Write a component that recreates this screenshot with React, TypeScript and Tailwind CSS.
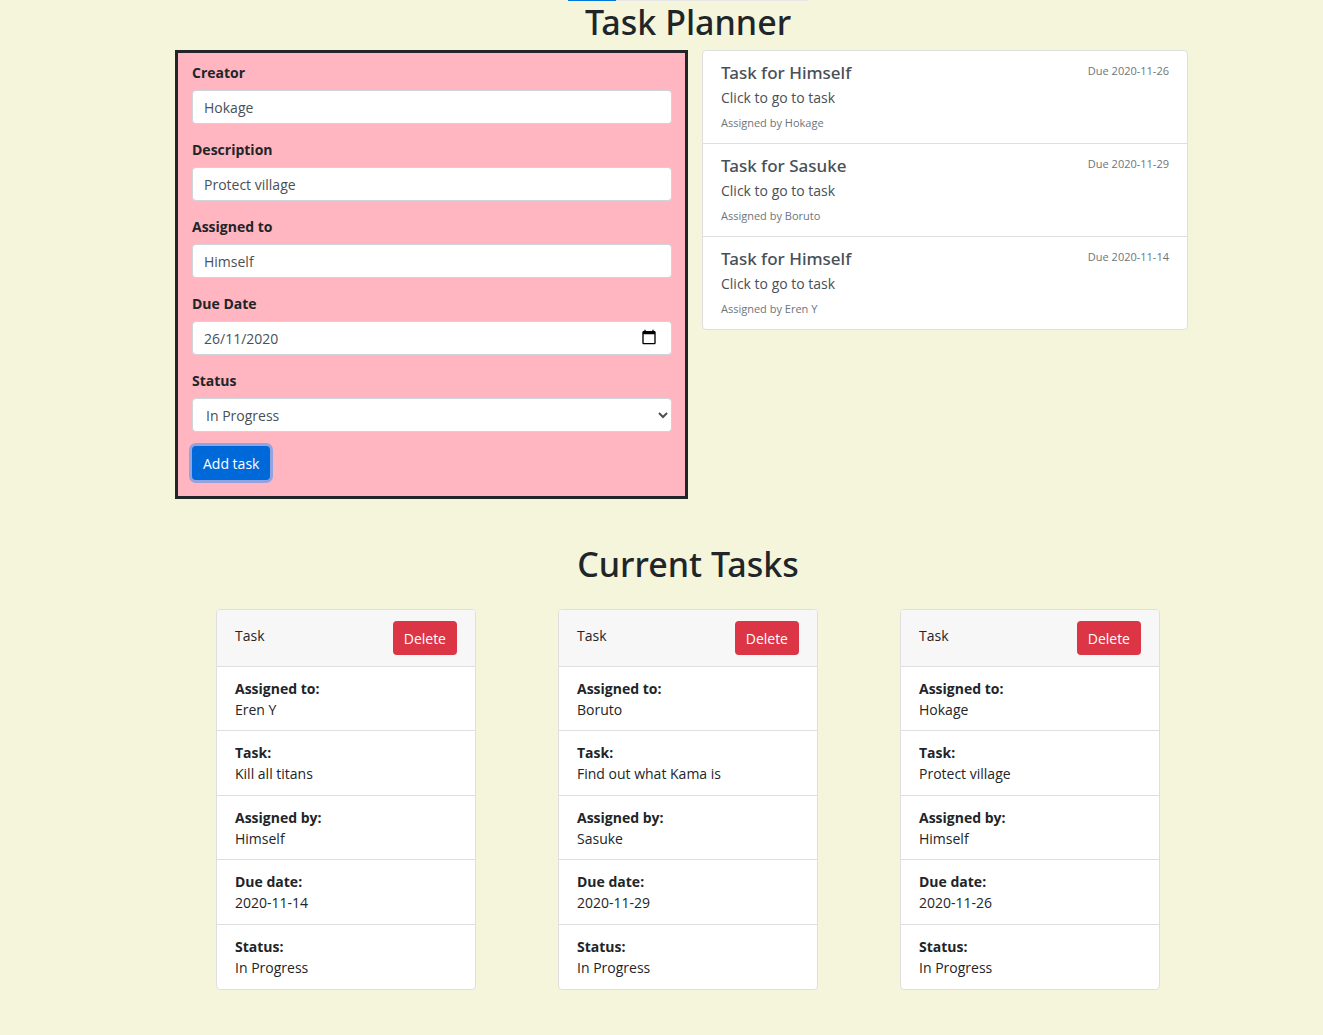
import React from "react";

type Task = {
  creator: string;
  description: string;
  assignee: string;
  due: string;
  status: string;
};

const tasks: Task[] = [
  { creator: "Eren Y", description: "Kill all titans", assignee: "Himself", due: "2020-11-14", status: "In Progress" },
  { creator: "Boruto", description: "Find out what Kama is", assignee: "Sasuke", due: "2020-11-29", status: "In Progress" },
  { creator: "Hokage", description: "Protect village", assignee: "Himself", due: "2020-11-26", status: "In Progress" },
];

const control =
  "block h-[34px] w-full rounded-[4px] border border-[#ced4da] bg-white px-[11px] text-[14px] text-[#495057]";

const heading = "text-center font-['Noto_Sans',sans-serif] text-[34px] leading-[43px] font-medium";

function Field({ id, label, children }: { id: string; label: string; children: React.ReactNode }) {
  return (
    <div>
      <label htmlFor={id} className="mb-[6px] block leading-[22px] font-bold">
        {label}
      </label>
      {children}
    </div>
  );
}

function TaskForm() {
  return (
    <form
      className="border-[3px] border-[#212529] bg-[#ffb6c1] pt-[9px] pr-[13px] pb-4 pl-[14px]"
      onSubmit={(e) => e.preventDefault()}
    >
      <div className="mb-[14px] flex flex-col gap-[15px]">
        <Field id="creator" label="Creator">
          <input id="creator" type="text" defaultValue="Hokage" className={control} />
        </Field>
        <Field id="description" label="Description">
          <input id="description" type="text" defaultValue="Protect village" className={control} />
        </Field>
        <Field id="assigned" label="Assigned to">
          <input id="assigned" type="text" defaultValue="Himself" className={control} />
        </Field>
        <Field id="due" label="Due Date">
          <div className="relative">
            <input id="due" type="text" inputMode="numeric" defaultValue="26/11/2020" className={control} />
            <button type="button" aria-label="Open calendar" className="absolute top-[8px] right-[15px]">
              <svg width="16" height="16" viewBox="0 0 24 24" fill="#000">
                <path d="M20 3h-1V1h-2v2H7V1H5v2H4c-1.1 0-2 .9-2 2v16c0 1.1.9 2 2 2h16c1.1 0 2-.9 2-2V5c0-1.1-.9-2-2-2zm0 18H4V8h16v13z" />
              </svg>
            </button>
          </div>
        </Field>
        <Field id="status" label="Status">
          <select
            id="status"
            defaultValue="In Progress"
            className="block h-[34px] w-full rounded-[4px] border border-[#ced4da] bg-white pl-[9px] text-[14px] text-[#495057]"
          >
            <option>To Do</option>
            <option>In Progress</option>
            <option>Review</option>
            <option>Done</option>
          </select>
        </Field>
      </div>
      <button
        type="submit"
        className="block h-[34px] rounded-[4px] bg-[#0069d9] px-[11px] text-white ring-[3px] ring-[#268fff]/50"
      >
        Add task
      </button>
    </form>
  );
}

function TaskList() {
  return (
    <div className="mr-[13px] ml-[14px] divide-y divide-[#dfdfdf] self-start rounded-[4px] border border-[#dfdfdf] bg-white">
      {[...tasks].reverse().map((t) => (
        <a key={t.creator} href="#tasks" className="block px-[18px] pt-[11px] pb-[10px] text-[#495057]">
          <div className="flex justify-between">
            <h5 className="mb-[3px] font-['Noto_Sans',sans-serif] text-[17px] leading-[22px] font-medium">
              Task for {t.assignee}
            </h5>
            <small className="text-[11px] leading-[18px] text-[#6c757d]">Due {t.due}</small>
          </div>
          <p className="mb-[3px] leading-[22px]">Click to go to task</p>
          <small className="block text-[11px] leading-[21px] text-[#6c757d]">Assigned by {t.creator}</small>
        </a>
      ))}
    </div>
  );
}

function TaskCard({ task }: { task: Task }) {
  const rows = [
    ["Assigned to:", task.creator],
    ["Task:", task.description],
    ["Assigned by:", task.assignee],
    ["Due date:", task.due],
    ["Status:", task.status],
  ];
  return (
    <article className="mx-[41px] overflow-hidden rounded-[4px] border border-[#dfdfdf] bg-white">
      <header className="flex items-start justify-between border-b border-[#dfdfdf] bg-[#f7f7f7] px-[18px] py-[11px]">
        <span className="mt-1 leading-[22px]">Task</span>
        <button type="button" className="h-[34px] rounded-[4px] bg-[#dc3545] px-[11px] text-white">
          Delete
        </button>
      </header>
      <dl className="grid min-h-[322px] auto-rows-fr divide-y divide-[#dfdfdf]">
        {rows.map(([name, value]) => (
          <div key={name} className="px-[18px] pt-[11px] leading-[21px]">
            <dt className="font-bold">{name}</dt>
            <dd>{value}</dd>
          </div>
        ))}
      </dl>
    </article>
  );
}

export default function App() {
  return (
    <div className="min-h-screen bg-[#f5f5dc] pb-11 pl-[53px] font-['Open_Sans',sans-serif] text-[14px] text-[#212529]">
      <main className="mx-auto max-w-[1026px]">
        <div className="mx-auto h-px w-60 bg-[#e6e6e6]">
          <div className="h-px w-12 bg-[#0078d7]" />
        </div>
        <h1 className={`mb-[6px] ${heading}`}>Task Planner</h1>
        <section className="grid grid-cols-2">
          <TaskForm />
          <TaskList />
        </section>
        <h1 className={`mt-11 mb-[23px] ${heading}`}>Current Tasks</h1>
        <section id="tasks" className="grid grid-cols-3">
          {tasks.map((t) => (
            <TaskCard key={t.creator} task={t} />
          ))}
        </section>
      </main>
    </div>
  );
}
